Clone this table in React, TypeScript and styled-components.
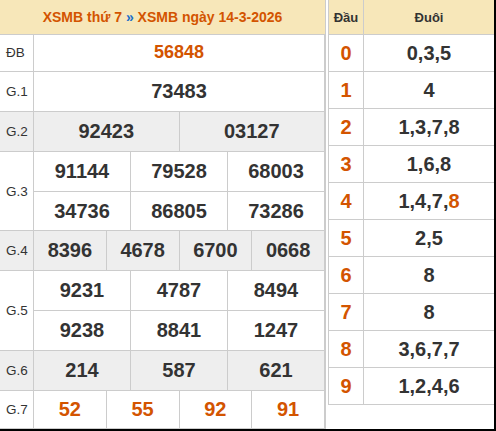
import React from "react";
import styled, { createGlobalStyle } from "styled-components";

const Global = createGlobalStyle`
  html, body { margin: 0; padding: 0; background: #fff; }
  body { font-family: "Liberation Sans", Arial, sans-serif; }
`;

const ORANGE = "#d35400";
const LINE = "#cccccc";
const BEIGE = "#f7e7b9";

const Frame = styled.div`
  width: 496px;
  height: 431px;
  box-sizing: border-box;
  border-right: 2px solid #000;
  border-bottom: 2px solid #000;
  display: flex;
  gap: 2px;
  overflow: hidden;
`;

const Results = styled.div`
  width: 326px;
  box-sizing: border-box;
  border-right: 1px solid ${LINE};
  display: flex;
  flex-direction: column;
`;

const Title = styled.div`
  height: 34px;
  background: ${BEIGE};
  border-bottom: 1px solid ${LINE};
  display: flex;
  align-items: center;
  justify-content: center;
  font-weight: bold;
  font-size: 14px;
  color: ${ORANGE};
  white-space: pre;
`;

const Sep = styled.span`
  color: #1a6fc9;
`;

const Prize = styled.div<{ $shade?: boolean; $h: number }>`
  display: flex;
  height: ${(p) => p.$h}px;
  background: ${(p) => (p.$shade ? "#eeeeee" : "#fff")};
`;

const Label = styled.div`
  width: 34px;
  flex: none;
  box-sizing: border-box;
  border-right: 1px solid ${LINE};
  border-bottom: 1px solid ${LINE};
  display: flex;
  align-items: center;
  padding-left: 6px;
  font-size: 13.5px;
  color: #333;
`;

const Grid = styled.div<{ $cols: number }>`
  flex: 1;
  display: grid;
  grid-template-columns: repeat(${(p) => p.$cols}, 1fr);
  grid-auto-rows: 1fr;
`;

const Num = styled.div<{ $hot?: boolean; $size?: number }>`
  box-sizing: border-box;
  border-bottom: 1px solid ${LINE};
  border-right: 1px solid ${LINE};
  display: flex;
  align-items: center;
  justify-content: center;
  font-weight: bold;
  font-size: ${(p) => p.$size ?? 20}px;
  color: ${(p) => (p.$hot ? ORANGE : "#333")};
`;

const Heads = styled.div`
  flex: 1;
  align-self: flex-start;
  box-sizing: border-box;
  border-left: 1px solid ${LINE};
  display: grid;
  grid-template-columns: 35px 1fr;
  grid-template-rows: 35px repeat(10, 37px);
`;

const HeadCell = styled.div<{ $head?: boolean; $first?: boolean; $hot?: boolean }>`
  box-sizing: border-box;
  border-bottom: 1px solid ${LINE};
  border-right: ${(p) => (p.$first ? `1px solid ${LINE}` : "none")};
  background: ${(p) => (p.$head ? BEIGE : "#fff")};
  display: flex;
  align-items: center;
  justify-content: center;
  font-weight: bold;
  font-size: ${(p) => (p.$head ? 13 : 20)}px;
  color: ${(p) => (p.$hot ? ORANGE : "#333")};
`;

const Hot = styled.span`
  color: ${ORANGE};
`;

type Row = { label: string; cols: number; nums: string[]; shade?: boolean; hot?: boolean; h: number; size?: number };

const rows: Row[] = [
  { label: "ĐB", cols: 1, nums: ["56848"], hot: true, h: 37, size: 18 },
  { label: "G.1", cols: 1, nums: ["73483"], h: 40 },
  { label: "G.2", cols: 2, nums: ["92423", "03127"], shade: true, h: 40 },
  { label: "G.3", cols: 3, nums: ["91144", "79528", "68003", "34736", "86805", "73286"], h: 80 },
  { label: "G.4", cols: 4, nums: ["8396", "4678", "6700", "0668"], shade: true, h: 40 },
  { label: "G.5", cols: 3, nums: ["9231", "4787", "8494", "9238", "8841", "1247"], h: 80 },
  { label: "G.6", cols: 3, nums: ["214", "587", "621"], shade: true, h: 40 },
  { label: "G.7", cols: 4, nums: ["52", "55", "92", "91"], hot: true, h: 38 },
];

const tails: React.ReactNode[] = [
  "0,3,5",
  "4",
  "1,3,7,8",
  "1,6,8",
  <>1,4,7,<Hot>8</Hot></>,
  "2,5",
  "8",
  "8",
  "3,6,7,7",
  "1,2,4,6",
];

export default function App() {
  return (
    <>
      <Global />
      <Frame>
        <Results>
          <Title>
            XSMB thứ 7 <Sep>»</Sep> XSMB ngày 14-3-2026
          </Title>
          {rows.map((r) => (
            <Prize key={r.label} $shade={r.shade} $h={r.h}>
              <Label>{r.label}</Label>
              <Grid $cols={r.cols}>
                {r.nums.map((n, i) => (
                  <Num key={i} $hot={r.hot} $size={r.size}>
                    {n}
                  </Num>
                ))}
              </Grid>
            </Prize>
          ))}
        </Results>
        <Heads>
          <HeadCell $head $first>Đầu</HeadCell>
          <HeadCell $head>Đuôi</HeadCell>
          {tails.map((t, i) => (
            <React.Fragment key={i}>
              <HeadCell $first $hot>{i}</HeadCell>
              <HeadCell>{t}</HeadCell>
            </React.Fragment>
          ))}
        </Heads>
      </Frame>
    </>
  );
}
